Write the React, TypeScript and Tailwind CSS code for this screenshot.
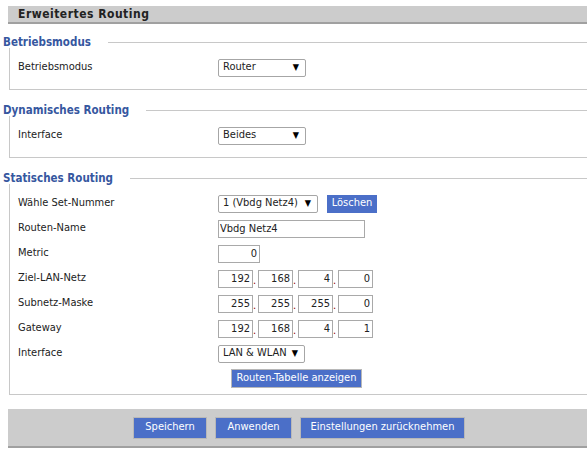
import React from 'react';

const Legend: React.FC<{ title: string }> = ({ title }) => (
    <div className="flex items-center h-[12px] pl-[3px]">
        <span className="pr-[17px] text-[11.5px] font-bold leading-[12px] text-[#36579f]">{title}</span>
        <div className="flex-1 h-px bg-[#c8c8c8]"></div>
    </div>
);

const Row: React.FC<{ label: string; children: React.ReactNode }> = ({ label, children }) => (
    <div className="flex items-center h-[25px]">
        <div className="w-[200px] shrink-0">{label}</div>
        <div className="flex items-center">{children}</div>
    </div>
);

const Select: React.FC<{ value: string; width: string }> = ({ value, width }) => (
    <div className={`${width} h-[18px] flex items-center justify-between pl-[4px] pr-[6px] border border-[#a6a6a6] rounded-[2px] bg-white`}>
        <span className="whitespace-nowrap">{value}</span>
        <span className="text-[9px] text-black">▼</span>
    </div>
);

const TextBox: React.FC<{ value: string; width: string; right?: boolean }> = ({ value, width, right }) => (
    <input
        readOnly
        value={value}
        className={`${width} h-[18px] border border-[#a9a9a9] bg-white outline-none ${right ? 'text-right px-[2px]' : 'text-left px-[1px]'}`}
    />
);

const IpField: React.FC<{ parts: string[] }> = ({ parts }) => (
    <div className="flex items-end">
        {parts.map((p, i) => (
            <React.Fragment key={i}>
                <TextBox value={p} width="w-[35px]" right />
                {i < parts.length - 1 && <span className="w-[5px] text-[#8b0000] leading-[14px]">.</span>}
            </React.Fragment>
        ))}
    </div>
);

const BlueButton: React.FC<{ label: string; className: string }> = ({ label, className }) => (
    <button className={`${className} whitespace-nowrap bg-[#4b6fc8] text-white border border-[#b8b8b8] flex items-center justify-center`}>
        {label}
    </button>
);

export default function App() {
    return (
        <div className="w-[587px] h-[450px] overflow-hidden bg-white text-[11px] text-[#222] font-['Tahoma','DejaVu_Sans_Condensed','DejaVu_Sans',sans-serif]">
            <div className="pt-[6px]">
                {/* Title bar */}
                <div className="ml-[8px] h-[18px] bg-[#cccccc] border-b-2 border-[#a0a0a0] pl-[10px] flex items-center">
                    <span className="text-[12px] font-bold text-[#222] tracking-[0.5px]">Erweitertes Routing</span>
                </div>

                {/* Betriebsmodus */}
                <div className="mt-[12px]">
                    <Legend title="Betriebsmodus" />
                    <div className="ml-[9px] border-l border-b border-[#c8c8c8] pt-[7px] pb-[9px] pl-[8px]">
                        <Row label="Betriebsmodus">
                            <Select value="Router" width="w-[88px]" />
                        </Row>
                    </div>
                </div>

                {/* Dynamisches Routing */}
                <div className="mt-[14px]">
                    <Legend title="Dynamisches Routing" />
                    <div className="ml-[9px] border-l border-b border-[#c8c8c8] pt-[7px] pb-[9px] pl-[8px]">
                        <Row label="Interface">
                            <Select value="Beides" width="w-[88px]" />
                        </Row>
                    </div>
                </div>

                {/* Statisches Routing */}
                <div className="mt-[14px]">
                    <Legend title="Statisches Routing" />
                    <div className="ml-[9px] border-l border-b border-[#c8c8c8] pt-[7px] pb-[3px] pl-[8px]">
                        <Row label="Wähle Set-Nummer">
                            <Select value="1 (Vbdg Netz4)" width="w-[100px]" />
                            <button className="ml-[9px] w-[50px] h-[18px] bg-[#4b6fc8] text-white flex items-center justify-center">Löschen</button>
                        </Row>
                        <Row label="Routen-Name">
                            <TextBox value="Vbdg Netz4" width="w-[147px]" />
                        </Row>
                        <Row label="Metric">
                            <TextBox value="0" width="w-[42px]" right />
                        </Row>
                        <Row label="Ziel-LAN-Netz">
                            <IpField parts={['192', '168', '4', '0']} />
                        </Row>
                        <Row label="Subnetz-Maske">
                            <IpField parts={['255', '255', '255', '0']} />
                        </Row>
                        <Row label="Gateway">
                            <IpField parts={['192', '168', '4', '1']} />
                        </Row>
                        <Row label="Interface">
                            <Select value="LAN & WLAN" width="w-[87px]" />
                        </Row>
                        <div className="flex items-center h-[25px] pl-[213px]">
                            <BlueButton label="Routen-Tabelle anzeigen" className="w-[131px] h-[19px] text-[11px]" />
                        </div>
                    </div>
                </div>

                {/* Footer */}
                <div className="mt-[14px] ml-[8px] h-[39px] bg-[#cccccc] border-b-2 border-[#a0a0a0] flex items-center justify-center gap-[8px] pl-[3px]">
                    <BlueButton label="Speichern" className="w-[74px] h-[22px] text-[11px]" />
                    <BlueButton label="Anwenden" className="w-[77px] h-[22px] text-[11px]" />
                    <BlueButton label="Einstellungen zurücknehmen" className="w-[165px] h-[22px] text-[11px]" />
                </div>
            </div>
        </div>
    );
}
